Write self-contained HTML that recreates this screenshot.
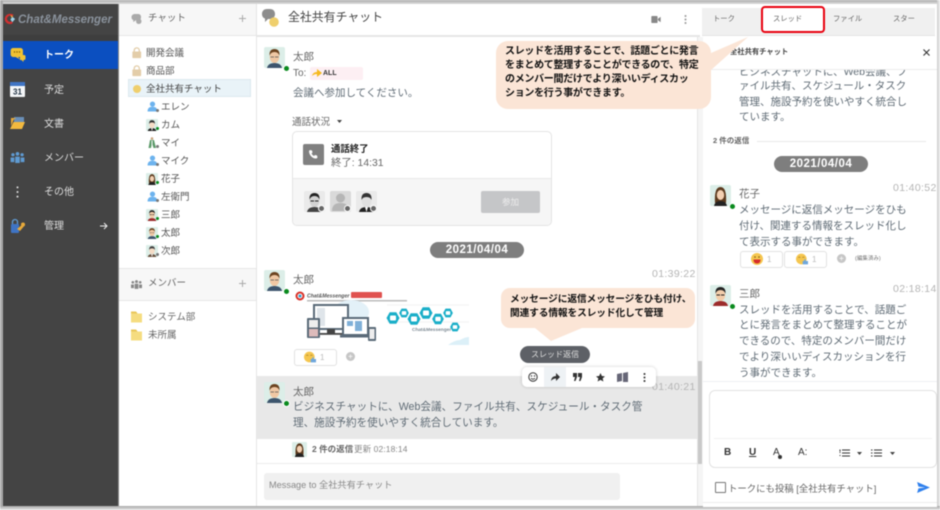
<!DOCTYPE html>
<html lang="ja">
<head>
<meta charset="utf-8">
<title>Chat&amp;Messenger</title>
<style>
html,body{margin:0;padding:0;background:#fff}
body{width:940px;height:510px;overflow:hidden;position:relative;font-family:"Liberation Sans","Noto Sans CJK JP",sans-serif;color:#555}
#w{position:absolute;left:0;top:0;width:940px;height:510px;overflow:hidden;filter:blur(.45px);background:#fff}
.a{position:absolute;white-space:nowrap;line-height:1.2;margin-top:2px}
.b{position:absolute}
svg{position:absolute;overflow:visible}
.nav{color:#ddd;font-size:10px;left:44px}
.ch{font-size:9.5px;color:#555}
.m{font-size:10.5px;color:#5f6b75}
.n{font-size:10.5px;color:#666}
.t{font-size:10.5px;color:#b5b5b5;letter-spacing:.35px}
.call{font-size:9.4px;font-weight:700;color:#222}
.co{font-size:10px;font-weight:700;color:#111;letter-spacing:-.3px}
.tab{font-size:7.3px;color:#666;letter-spacing:0}
.date{font-size:11.5px;font-weight:700;color:#fff;text-align:center;line-height:17px;letter-spacing:.5px;background:#7e7e7e;border-radius:8px;width:94px;height:16px}
</style>
</head>
<body>
<div id="w">
<svg width="0" height="0" style="position:absolute">
<defs>
<g id="taro"><rect width="21" height="21" rx="2" fill="#dceee8"/><path d="M3 21q1-5 7.500-5T18 21z" fill="#3d556d"/><ellipse cx="10.500" cy="10" rx="4.800" ry="6" fill="#f0c8a4"/><path d="M5.500 9q-.5-7 5-7t5 7q-1-4-5-4t-5 4z" fill="#6b4320"/><path d="M6.500 10h3.500M11 10h3.500" stroke="#555" stroke-width=".8"/></g>
<g id="hana"><rect width="21" height="21" rx="2" fill="#dceee8"/><path d="M5 18q-1-16 5.500-16T16 18z" fill="#5b3a1e"/><ellipse cx="10.500" cy="10" rx="3.700" ry="5" fill="#f3d0b2"/><path d="M4 21q1-5 6.500-5T17 21z" fill="#222"/></g>
<g id="sabu"><rect width="21" height="21" rx="2" fill="#dceee8"/><path d="M3 21q1-5 7.500-5T18 21z" fill="#9c2b2b"/><ellipse cx="10.500" cy="10" rx="4.800" ry="6" fill="#f2cdaa"/><path d="M5.500 9q-.5-7 5-7t5 7q-1-4-5-4t-5 4z" fill="#222"/><path d="M6.500 10h3.500M11 10h3.500" stroke="#222" stroke-width="1"/></g>
<g id="kam"><rect width="21" height="21" rx="2" fill="#dceee8"/><path d="M3 21q1-5 7.500-5T18 21z" fill="#222"/><path d="M9 16h3l-1.500 5z" fill="#fff"/><ellipse cx="10.500" cy="10" rx="4.800" ry="6" fill="#f5dcc6"/><path d="M5.500 9q-.5-7 5-7t5 7q-1-3-5-3t-5 3z" fill="#333"/></g>
<g id="jiro"><rect width="21" height="21" rx="2" fill="#dceee8"/><path d="M3 21q1-5 7.500-5T18 21z" fill="#6b5340"/><path d="M9 16h3l-1.500 5z" fill="#fff"/><ellipse cx="10.500" cy="10" rx="4.800" ry="6" fill="#f5dcc6"/><path d="M5.500 9q-.5-7 5-7t5 7q-1-3-5-3t-5 3z" fill="#444"/></g>
<g id="blue"><circle cx="10.500" cy="6" r="5" fill="#6db3ee"/><path d="M1 20q0-9 9.500-9T20 20z" fill="#6db3ee"/></g>
<g id="like"><circle cx="8" cy="8" r="8" fill="#f5c64f"/><path d="M3.500 6q1.500-2 3 0M9.500 6q1.500-2 3 0" stroke="#8a6a20" fill="none" stroke-width=".9"/><path d="M10 16v-5h2l1-3 1.500 .5V11H18v5z" fill="#6ea6dc"/></g>
<path id="plus" d="M1 4.500h7M4.500 1v7" stroke="#aaa" stroke-width="1"/>
<g id="lock"><path d="M3 6V4a3.500 3.500 0 0 1 7 0v2" stroke="#e3cda9" stroke-width="1.800" fill="none"/><rect x="0.500" y="5.500" width="12" height="9" rx="1" fill="#e3cda9"/></g>
<g id="fold"><path d="M0 1.500h5l1.500 2H11v9H0z" fill="#f5dc80"/><path d="M0 1.500h5l1.500 2H0z" fill="#e9c65a"/></g>
<g id="bub"><path d="M5 0h9a3 3 0 0 1 3 3v5a3 3 0 0 1-3 3h-3l3 3-6-3H5a3 3 0 0 1-3-3V3a3 3 0 0 1 3-3z" fill="#f1c232"/></g>
<g id="smile"><circle cx="5" cy="5" r="4.200" fill="none" stroke="#333" stroke-width="1"/><circle cx="3.500" cy="4" r=".7" fill="#333"/><circle cx="6.500" cy="4" r=".7" fill="#333"/><path d="M3 6.200q2 2 4 0" stroke="#333" fill="none" stroke-width=".9"/></g>
<g id="hex"><polygon points="-6.500,0 -3.300,-5.800 3.300,-5.800 6.500,0 3.300,5.800 -3.300,5.800" fill="#19aec8"/><rect x="-3" y="-2.500" width="6" height="5" rx="1" fill="#fff"/></g>
</defs>
</svg>

<!-- outer frame shadow -->
<div class="b" style="left:0;top:0;width:940px;height:4px;background:linear-gradient(#aaa,#ddd)"></div>
<div class="b" style="left:0;top:0;width:3px;height:510px;background:#aaa"></div>
<div class="b" style="left:937px;top:0;width:3px;height:510px;background:linear-gradient(90deg,#ccc,#eee)"></div>
<div class="b" style="left:0;top:506px;width:940px;height:4px;background:linear-gradient(#a8a8a8,#e5e5e5)"></div>

<!-- sidebar -->
<div class="b" style="left:3px;top:4px;width:115px;height:502px;background:#444"></div>
<div class="b" style="left:3px;top:35px;width:115px;height:6px;background:#3e3e3e"></div>
<div class="b" style="left:118px;top:4px;width:1px;height:502px;background:#888"></div>
<svg style="left:4px;top:13px" width="12" height="12" viewBox="0 0 13 13"><path d="M6.500 1a5.500 5.500 0 1 0 3 10l-1-2a3.300 3.300 0 1 1 0-5.500l2-1.500A5.500 5.500 0 0 0 6.500 1z" fill="#d32f2f"/><path d="M9 4l3 2.500L9 10 7 7z" fill="#9fd4e8"/><path d="M7 2l3 1.500L8 5z" fill="#f3a23a"/></svg>
<div class="a" style="left:18px;top:12px;font-size:11.5px;font-weight:700;font-style:italic;color:#8a929c">Chat&amp;Messenger</div>
<div class="b" style="left:3px;top:41px;width:115px;height:28px;background:#0b4fc0"></div>
<svg style="left:10px;top:48px" width="16" height="14" viewBox="0 0 16 14"><use href="#bub" transform="translate(-1 0) scale(.82)"/><path d="M10 7h4a1.500 1.500 0 0 1 1.500 1.500v2a1.500 1.500 0 0 1-1.500 1.500h-.5v2l-2-2H10z" fill="#f1c232"/><circle cx="4.500" cy="4" r=".7" fill="#7a5a00"/><circle cx="7" cy="4" r=".7" fill="#7a5a00"/><circle cx="9.500" cy="4" r=".7" fill="#7a5a00"/></svg>
<div class="a nav" style="top:48px;color:#fff;font-weight:700">トーク</div>
<svg style="left:10px;top:82px" width="15" height="15" viewBox="0 0 15 15"><rect width="15" height="15" rx="1" fill="#f4f6f8"/><rect width="15" height="4" fill="#3f74c4"/><text x="7.500" y="12.500" font-size="8" font-weight="700" text-anchor="middle" fill="#234" font-family="Liberation Sans">31</text></svg>
<div class="a nav" style="top:83px">予定</div>
<svg style="left:10px;top:116px" width="15" height="14" viewBox="0 0 15 14"><rect x="4" y="1" width="10" height="7" fill="#6a8fb8"/><path d="M1 2h4l1 1h-2L1 10z" fill="#e6a93b"/><path d="M3.500 6H15l-3 7H0z" fill="#f2b93f"/></svg>
<div class="a nav" style="top:117px">文書</div>
<svg style="left:10px;top:152px" width="15" height="11" viewBox="0 0 15 12" fill="#5f9bd3"><circle cx="2.500" cy="3" r="1.800"/><circle cx="7.500" cy="2" r="2"/><circle cx="12.500" cy="3" r="1.800"/><path d="M0 6h4v5H0zM5 5h5v7H5zM11 6h4v5h-4z"/></svg>
<div class="a nav" style="top:151px">メンバー</div>
<svg style="left:16px;top:186px" width="3" height="12" viewBox="0 0 3 13" fill="#ddd"><circle cx="1.500" cy="1.500" r="1.100"/><circle cx="1.500" cy="6.500" r="1.100"/><circle cx="1.500" cy="11.500" r="1.100"/></svg>
<div class="a nav" style="top:185px">その他</div>
<svg style="left:10px;top:219px" width="16" height="14" viewBox="0 0 16 14"><path d="M2.500 5V3a2.500 2.500 0 0 1 5 0v2" stroke="#5f9bd3" stroke-width="1.300" fill="none"/><rect x="1" y="5" width="8" height="9" rx="1" fill="#3f74c4"/><path d="M7 10l6-5 2 1-5 6z" fill="#e6a93b"/><circle cx="13" cy="5.500" r="2" fill="#e6a93b"/></svg>
<div class="a nav" style="top:219px">管理</div>
<svg style="left:100px;top:222px" width="8" height="8" viewBox="0 0 8 8"><path d="M0 4h7M4 1l3 3-3 3" stroke="#eee" stroke-width="1" fill="none"/></svg>

<!-- channel column -->
<div class="b" style="left:119px;top:4px;width:137px;height:31px;background:#f7f7f7;border-bottom:1px solid #e6e6e6"></div>
<svg style="left:131px;top:14px" width="11" height="10" viewBox="0 0 12 11" fill="#aaa"><path d="M4.500 0h3C10 0 11 1.500 11 3.500S10 7 7.500 7H5L2.500 9V6.700C1 6.200 .5 5 .5 3.500.5 1.500 2 0 4.500 0z"/><circle cx="8.500" cy="8" r="3"/></svg>
<div class="a" style="left:148px;top:11px;font-size:9.500px;color:#666">チャット</div>
<svg style="left:238px;top:14px" width="9" height="9"><use href="#plus"/></svg>
<svg style="left:132px;top:47px" width="9.500" height="12" viewBox="0 0 13 15"><use href="#lock"/></svg>
<div class="a ch" style="left:146px;top:46px">開発会議</div>
<svg style="left:132px;top:65px" width="9.500" height="12" viewBox="0 0 13 15"><use href="#lock"/></svg>
<div class="a ch" style="left:146px;top:64px">商品部</div>
<div class="b" style="left:128px;top:79px;width:121px;height:16px;background:#e9f3f8;border:1px solid #dbe8ee"></div>
<div class="b" style="left:133px;top:85px;width:8px;height:8px;border-radius:50%;background:#efcf6d"></div>
<div class="a ch" style="left:146px;top:82px;color:#444">全社共有チャット</div>

<svg style="left:147px;top:101px" width="11" height="11" viewBox="0 0 21 21"><use href="#blue"/></svg><i class="b" style="left:156px;top:109px;width:3px;height:3px;border-radius:50%;background:#777"></i>
<div class="a ch" style="left:161px;top:100px">エレン</div>
<svg style="left:146px;top:119px" width="12" height="12" viewBox="0 0 21 21"><use href="#kam"/></svg><i class="b" style="left:156px;top:127px;width:3px;height:3px;border-radius:50%;background:#0a8a1e"></i>
<div class="a ch" style="left:161px;top:118px">カム</div>
<svg style="left:147px;top:137px" width="11" height="12" viewBox="0 0 11 12"><circle cx="5" cy="1.500" r="1.300" fill="#c9a27a"/><path d="M3 3h4l2 8H6.500L5 6l-1 5H1.500z" fill="#5c9a6a"/><path d="M4.500 3.500h1v7h-1z" fill="#fff"/></svg><i class="b" style="left:156px;top:145px;width:3px;height:3px;border-radius:50%;background:#777"></i>
<div class="a ch" style="left:161px;top:136px">マイ</div>
<svg style="left:147px;top:155px" width="11" height="11" viewBox="0 0 21 21"><use href="#blue"/></svg><i class="b" style="left:156px;top:163px;width:3px;height:3px;border-radius:50%;background:#777"></i>
<div class="a ch" style="left:161px;top:154px">マイク</div>
<svg style="left:146px;top:173px" width="12" height="12" viewBox="0 0 21 21"><use href="#hana"/></svg><i class="b" style="left:156px;top:181px;width:3px;height:3px;border-radius:50%;background:#0a8a1e"></i>
<div class="a ch" style="left:161px;top:172px">花子</div>
<svg style="left:147px;top:191px" width="11" height="11" viewBox="0 0 21 21"><use href="#blue"/></svg><i class="b" style="left:156px;top:199px;width:3px;height:3px;border-radius:50%;background:#777"></i>
<div class="a ch" style="left:161px;top:190px">左衛門</div>
<svg style="left:146px;top:209px" width="12" height="12" viewBox="0 0 21 21"><use href="#sabu"/></svg><i class="b" style="left:156px;top:217px;width:3px;height:3px;border-radius:50%;background:#0a8a1e"></i>
<div class="a ch" style="left:161px;top:208px">三郎</div>
<svg style="left:146px;top:227px" width="12" height="12" viewBox="0 0 21 21"><use href="#taro"/></svg><i class="b" style="left:156px;top:235px;width:3px;height:3px;border-radius:50%;background:#0a8a1e"></i>
<div class="a ch" style="left:161px;top:226px">太郎</div>
<svg style="left:146px;top:245px" width="12" height="12" viewBox="0 0 21 21"><use href="#jiro"/></svg><i class="b" style="left:156px;top:253px;width:3px;height:3px;border-radius:50%;background:#777"></i>
<div class="a ch" style="left:161px;top:244px">次郎</div>

<div class="b" style="left:119px;top:268px;width:137px;height:31px;background:#f7f7f7;border-top:1px solid #e6e6e6;border-bottom:1px solid #e6e6e6"></div>
<svg style="left:131px;top:280px" width="11" height="9" viewBox="0 0 15 12" fill="#888"><circle cx="2.500" cy="3" r="1.800"/><circle cx="7.500" cy="2" r="2"/><circle cx="12.500" cy="3" r="1.800"/><path d="M0 6h4v5H0zM5 5h5v7H5zM11 6h4v5h-4z"/></svg>
<div class="a" style="left:148px;top:276px;font-size:9.500px;color:#666">メンバー</div>
<svg style="left:238px;top:279px" width="9" height="9"><use href="#plus"/></svg>
<svg style="left:131px;top:310px" width="11" height="13"><use href="#fold"/></svg>
<div class="a" style="left:148px;top:310px;font-size:9.500px;color:#666">システム部</div>
<svg style="left:131px;top:328px" width="11" height="13"><use href="#fold"/></svg>
<div class="a" style="left:148px;top:328px;font-size:9.500px;color:#666">未所属</div>

<!-- chat column -->
<div class="b" style="left:256px;top:4px;width:1px;height:502px;background:#e5e5e5"></div>
<div class="b" style="left:257px;top:35px;width:443px;height:2px;background:#e6e6e6"></div>
<svg style="left:261px;top:9px" width="18" height="18" viewBox="0 0 18 18"><path d="M6 0h3c3 0 5 2 5 5s-2 5-5 5H7l-3 3v-3.500C2 9 1 7 1 5c0-3 2-5 5-5z" fill="#8d8d8d"/><circle cx="13" cy="13" r="4.800" fill="#efcf6d"/></svg>
<div class="a" style="left:288px;top:8px;font-size:11.900px;color:#444">全社共有チャット</div>
<svg style="left:651px;top:16px" width="10" height="7" viewBox="0 0 12 9" fill="#888"><rect width="8" height="9" rx="1"/><path d="M8.500 3.500L12 1v7L8.500 5.500z"/></svg>
<svg style="left:684px;top:15px" width="3" height="9" fill="#999"><circle cx="1.500" cy="1" r="1"/><circle cx="1.500" cy="4.500" r="1"/><circle cx="1.500" cy="8" r="1"/></svg>

<svg style="left:264px;top:47px" width="21" height="21"><use href="#taro"/></svg>
<i class="b" style="left:283px;top:65px;width:5px;height:5px;border-radius:50%;background:#0a8a1e;border:.5px solid #fff"></i>
<div class="a n" style="left:293px;top:49px">太郎</div>
<div class="a" style="left:293px;top:66px;font-size:10px;color:#666">To:</div>
<div class="b" style="left:310px;top:67px;width:53px;height:13px;background:#fdeff3;border-radius:2px"></div>
<svg style="left:312px;top:69px" width="10" height="8" viewBox="0 0 10 8"><path d="M0 7q1-4 5-4V0l5 4-5 4V5Q2 5 0 7z" fill="#f6b91e"/></svg>
<div class="a" style="left:323px;top:68px;font-size:7px;font-weight:700;color:#333">ALL</div>
<div class="a m" style="left:293px;top:85px">会議へ参加してください。</div>
<div class="a" style="left:292px;top:115px;font-size:9.500px;color:#666">通話状況</div>
<svg style="left:337px;top:120px" width="5" height="3"><path d="M0 0h5L2.500 3z" fill="#444"/></svg>

<div class="b" style="left:292px;top:131px;width:258px;height:93px;border:1px solid #e4e4e4;border-radius:5px;background:#fff;overflow:hidden"><div class="b" style="left:0;top:46px;width:258px;height:47px;background:#f6f6f6;border-top:1px solid #e8e8e8"></div></div>
<div class="b" style="left:303px;top:144px;width:21px;height:21px;background:#808080;border-radius:2px"></div>
<svg style="left:309px;top:150px" width="9" height="9" viewBox="0 0 9 9"><path d="M1 0l2 .5.5 2-1 1a5 5 0 0 0 2.500 2.500l1-1 2 .5.500 2-1 1C3.500 9 0 5 0 1z" fill="#fff"/></svg>
<div class="a call" style="left:331px;top:141px">通話終了</div>
<div class="a" style="left:331px;top:156px;font-size:10.400px;color:#666">終了: 14:31</div>

<svg style="left:304px;top:191px;filter:grayscale(1)" width="21" height="21"><use href="#sabu"/></svg><i class="b" style="left:318px;top:205px;width:5px;height:5px;border-radius:50%;background:#666;border:1px solid #fff"></i>
<svg style="left:330px;top:191px" width="21" height="21"><rect width="21" height="21" rx="2" fill="#d9d9d9"/><circle cx="10.500" cy="7" r="4.500" fill="#b5b5b5"/><path d="M2 20q0-8 8.500-8T19 20z" fill="#b5b5b5"/></svg><i class="b" style="left:344px;top:205px;width:5px;height:5px;border-radius:50%;background:#666;border:1px solid #fff"></i>
<svg style="left:356px;top:191px;filter:grayscale(1)" width="21" height="21"><use href="#kam"/></svg><i class="b" style="left:370px;top:205px;width:5px;height:5px;border-radius:50%;background:#666;border:1px solid #fff"></i>
<div class="b" style="left:481px;top:191px;width:59px;height:22px;background:#c5c6c8;border-radius:2px;color:#eee;font-size:8.500px;text-align:center;line-height:22px">参加</div>

<div class="b date" style="left:430px;top:242px">2021/04/04</div>

<svg style="left:264px;top:270px" width="21" height="21"><use href="#taro"/></svg>
<i class="b" style="left:283px;top:288px;width:5px;height:5px;border-radius:50%;background:#0a8a1e;border:.5px solid #fff"></i>
<div class="a n" style="left:293px;top:272px">太郎</div>
<div class="a t" style="left:652px;top:266px">01:39:22</div>

<!-- banner -->
<svg style="left:295px;top:290px" width="176" height="56" viewBox="0 0 176 56">
<circle cx="5" cy="6" r="3.500" fill="none" stroke="#d8322a" stroke-width="2"/><circle cx="5" cy="6" r="1.500" fill="#2a9fd0"/>
<text x="12" y="7.500" font-size="5.200" font-style="italic" font-weight="700" fill="#555" font-family="Liberation Sans">Chat&amp;Messenger</text>
<rect x="56" y="2" width="31" height="6" rx="1" fill="#e0524f"/>
<rect x="12" y="10" width="100" height="1.500" fill="#bbb"/>
<ellipse cx="56" cy="22" rx="18" ry="12" fill="#e3f1f8"/>
<rect x="19" y="15" width="34" height="24" fill="#fff" stroke="#5a6a78" stroke-width="2"/><rect x="22" y="18" width="8" height="18" fill="#dfe5ea"/><rect x="32" y="39" width="8" height="5" fill="#444"/><rect x="25" y="43" width="22" height="1.800" fill="#444"/>
<rect x="12" y="28" width="13" height="20" rx="1" fill="#5a6a78"/><rect x="14" y="30" width="9" height="7.500" fill="#eee"/><rect x="14" y="39" width="9" height="7.500" fill="#dbb"/>
<rect x="48" y="28" width="25" height="17" fill="#fff" stroke="#5a6a78" stroke-width="2"/><rect x="52" y="31" width="6" height="5" fill="#7fb0d8"/><rect x="60" y="31" width="7" height="10" fill="#7fb0d8"/><rect x="45" y="45" width="31" height="2.500" fill="#5a6a78"/>
<rect x="73" y="37" width="8" height="14" rx="1" fill="#5a6a78"/><rect x="74.500" y="39" width="5" height="10" fill="#eee"/>
<path d="M153 55Q160 50 165 50 170 47 174 47V55z" fill="#dcf0f8"/>
<path d="M92 15h82M92 32h82" stroke="#f2f2f2"/>
<use href="#hex" transform="translate(98 28)"/><use href="#hex" transform="translate(109 23) scale(.75)"/><use href="#hex" transform="translate(119 29)"/><use href="#hex" transform="translate(131 23)"/><use href="#hex" transform="translate(143 29) scale(.9)"/><use href="#hex" transform="translate(153 23) scale(.75)"/><use href="#hex" transform="translate(160 37) scale(.75)"/>
<text x="117" y="41" font-size="4.800" font-weight="700" fill="#7d8a94" font-family="Liberation Sans">Chat&amp;Messenger</text>
</svg>

<div class="b" style="left:294px;top:349px;width:41px;height:15px;border:1px solid #e2e2e2;border-radius:3px;background:#fff"></div>
<svg style="left:304px;top:351px" width="12" height="12" viewBox="0 0 18 16"><use href="#like"/></svg>
<div class="a" style="left:320px;top:351px;font-size:8px;color:#bbb">1</div>
<div class="b" style="left:346px;top:352px;width:9px;height:9px;border-radius:50%;background:#c6c6c6;color:#fff;font-size:8px;text-align:center;line-height:9px">+</div>

<!-- highlighted row -->
<div class="b" style="left:257px;top:376px;width:443px;height:63px;background:#e8e8e8"></div>
<svg style="left:264px;top:382px" width="21" height="21"><use href="#taro"/></svg>
<i class="b" style="left:283px;top:400px;width:5px;height:5px;border-radius:50%;background:#0a8a1e;border:.5px solid #fff"></i>
<div class="a n" style="left:293px;top:384px">太郎</div>
<div class="a t" style="left:652px;top:379px">01:40:21</div>
<div class="a m" style="left:293px;top:399px;font-size:10.600px;letter-spacing:.02px">ビジネスチャットに、Web会議、ファイル共有、スケジュール・タスク管</div>
<div class="a m" style="left:293px;top:415px;font-size:10.600px">理、施設予約を使いやすく統合しています。</div>

<svg style="left:292px;top:442px" width="15" height="15" viewBox="0 0 21 21"><use href="#hana"/></svg>
<div class="a" style="left:312px;top:442px;font-size:8.500px;font-weight:700;color:#666">2 件の返信</div>
<div class="a" style="left:354px;top:442px;font-size:8.500px;color:#888;letter-spacing:.1px">更新 02:18:14</div>
<div class="b" style="left:257px;top:463px;width:443px;height:1px;background:#ececec"></div>
<div class="b" style="left:264px;top:473px;width:356px;height:27px;background:#f0f0f0;border-radius:3px"></div>
<div class="a" style="left:269px;top:478px;font-size:9.200px;color:#888">Message to 全社共有チャット</div>

<!-- scrollbar -->
<div class="b" style="left:697px;top:37px;width:5px;height:469px;background:#f5f5f5;border-left:1px solid #e5e5e5"></div>
<div class="b" style="left:698px;top:361px;width:4px;height:103px;background:#c9c9c9"></div>

<!-- right column -->
<div class="b" style="left:702px;top:8px;width:233px;height:27px;background:#f0f0f0;border-bottom:1px solid #e4e4e4"></div>
<div class="a tab" style="left:713px;top:13px">トーク</div>
<div class="b" style="left:761px;top:6px;width:60px;height:23px;background:#fff;border:2px solid #e8000e;border-radius:4px"></div>
<div class="a tab" style="left:773px;top:13px">スレッド</div>
<div class="a tab" style="left:833px;top:13px">ファイル</div>
<div class="a tab" style="left:893px;top:13px">スター</div>

<div class="a" style="left:730px;top:46px;font-size:7.300px;font-weight:700;color:#444">全社共有チャット</div>
<svg style="left:923px;top:49px" width="7" height="7"><path d="M.5 .5l6 6M6.500 .5l-6 6" stroke="#333" stroke-width="1.100"/></svg>
<div class="b" style="left:702px;top:69px;width:235px;height:1px;background:#ececec"></div>
<div class="a m" style="left:739px;top:68px;height:7px;overflow:hidden"><span style="position:relative;top:-4px">ビジネスチャットに、Web会議、フ</span></div>
<div class="a m" style="left:739px;top:78px">ァイル共有、スケジュール・タスク</div>
<div class="a m" style="left:739px;top:94px">管理、施設予約を使いやすく統合し</div>
<div class="a m" style="left:739px;top:109px">ています。</div>

<div class="a" style="left:713px;top:134px;font-size:7.500px;font-weight:700;color:#666">2 件の返信</div>
<div class="b" style="left:757px;top:141px;width:169px;height:1px;background:#e9e9e9"></div>
<div class="b date" style="left:774px;top:156px">2021/04/04</div>

<svg style="left:710px;top:185px" width="21" height="21"><use href="#hana"/></svg>
<i class="b" style="left:729px;top:203px;width:5px;height:5px;border-radius:50%;background:#0a8a1e;border:.5px solid #fff"></i>
<div class="a n" style="left:739px;top:186px">花子</div>
<div class="a t" style="left:893px;top:180px">01:40:52</div>
<div class="a m" style="left:739px;top:202px">メッセージに返信メッセージをひも</div>
<div class="a m" style="left:739px;top:218px">付け、関連する情報をスレッド化し</div>
<div class="a m" style="left:739px;top:234px">て表示する事ができます。</div>
<div class="b" style="left:740px;top:251px;width:41px;height:15px;border:1px solid #e2e2e2;border-radius:3px"></div>
<div class="b" style="left:784px;top:251px;width:41px;height:15px;border:1px solid #e2e2e2;border-radius:3px"></div>
<svg style="left:751px;top:253px" width="12" height="12" viewBox="0 0 12 12"><circle cx="6" cy="6" r="6" fill="#f5c64f"/><path d="M2.500 6.500h7q0 4-3.500 4t-3.500-4z" fill="#d52b2b"/><circle cx="4" cy="4" r=".8" fill="#7a5a10"/><circle cx="8" cy="4" r=".8" fill="#7a5a10"/></svg>
<div class="a" style="left:767px;top:253px;font-size:8px;color:#bbb">1</div>
<svg style="left:796px;top:253px" width="12" height="12" viewBox="0 0 18 16"><use href="#like"/></svg>
<div class="a" style="left:812px;top:253px;font-size:8px;color:#bbb">1</div>
<div class="b" style="left:837px;top:254px;width:9px;height:9px;border-radius:50%;background:#c6c6c6;color:#fff;font-size:8px;text-align:center;line-height:9px">+</div>
<div class="a" style="left:855px;top:254px;font-size:5.500px;color:#777">(編集済み)</div>

<svg style="left:710px;top:285px" width="21" height="21"><use href="#sabu"/></svg>
<i class="b" style="left:729px;top:303px;width:5px;height:5px;border-radius:50%;background:#0a8a1e;border:.5px solid #fff"></i>
<div class="a n" style="left:739px;top:286px">三郎</div>
<div class="a t" style="left:893px;top:281px">02:18:14</div>
<div class="a m" style="left:739px;top:302px">スレッドを活用することで、話題ご</div>
<div class="a m" style="left:739px;top:317px">とに発言をまとめて整理することが</div>
<div class="a m" style="left:739px;top:333px">できるので、特定のメンバー間だけ</div>
<div class="a m" style="left:739px;top:349px">でより深いいディスカッションを行</div>
<div class="a m" style="left:739px;top:365px">う事ができます。</div>

<div class="b" style="left:703px;top:381px;width:234px;height:125px;background:#fff;border-top:1px solid #eef0f3"></div>
<div class="b" style="left:709px;top:390px;width:226px;height:76px;border:1px solid #e2e2e2;border-radius:6px;background:#fff"></div>
<div class="b" style="left:714px;top:438px;width:218px;height:1px;background:#f1f1f1"></div>
<div class="a" style="left:724px;top:445px;font-size:10px;font-weight:700;color:#333">B</div>
<div class="a" style="left:749px;top:445px;font-size:10px;color:#333;text-decoration:underline;font-weight:700">U</div>
<div class="a" style="left:773px;top:445px;font-size:10px;color:#333">A</div>
<div class="b" style="left:778px;top:455px;width:4px;height:4px;border-radius:50%;background:#333"></div>
<div class="a" style="left:798px;top:445px;font-size:10px;color:#333">A:</div>
<svg style="left:839px;top:449px" width="11" height="8" viewBox="0 0 11 8" stroke="#333" stroke-width="1"><path d="M3 1h8M3 4h8M3 7h8M1 .5v2M.5 3.500h1M.5 6.500h1"/></svg>
<svg style="left:857px;top:452px" width="5" height="3"><path d="M0 0h5L2.500 3z" fill="#444"/></svg>
<svg style="left:871px;top:449px" width="11" height="8" viewBox="0 0 11 8" stroke="#333" stroke-width="1"><path d="M3 1h8M3 4h8M3 7h8M0 1h1.500M0 4h1.500M0 7h1.500"/></svg>
<svg style="left:890px;top:452px" width="5" height="3"><path d="M0 0h5L2.500 3z" fill="#444"/></svg>
<div class="b" style="left:715px;top:482px;width:9px;height:9px;border:1px solid #777;border-radius:1px"></div>
<div class="a" style="left:728px;top:481px;font-size:9.400px;color:#666">トークにも投稿 [全社共有チャット]</div>
<svg style="left:917px;top:482px" width="13" height="11" viewBox="0 0 14 12"><path d="M0 0l14 6-14 6 1.500-5L9 6 1.500 5z" fill="#2f80ed"/></svg>
<div class="b" style="left:703px;top:502px;width:234px;height:1px;background:#ececec"></div>

<!-- callouts -->
<svg style="left:0;top:0" width="940" height="510"><path d="M508 41H699a12 12 0 0 1 12 12L748 37 711 70V97a12 12 0 0 1-12 12H508a12 12 0 0 1-12-12V53a12 12 0 0 1 12-12z" fill="#fbe5d6"/><path d="M510 288H686a9 9 0 0 1 9 9V319a9 9 0 0 1-9 9H582L551 341 535 328H510a9 9 0 0 1-9-9V297a9 9 0 0 1 9-9z" fill="#fbe5d6"/></svg>
<div class="a co" style="left:505px;top:43px;line-height:14px">スレッドを活用することで、話題ごとに発言<br>をまとめて整理することができるので、特定<br>のメンバー間だけでより深いいディスカッ<br>ションを行う事ができます。</div>
<div class="a co" style="left:510px;top:291px;line-height:13.500px;font-size:9.700px;letter-spacing:-.1px">メッセージに返信メッセージをひも付け、<br>関連する情報をスレッド化して管理</div>

<div class="b" style="left:520px;top:346px;width:70px;height:17px;border-radius:9px;background:#5d6066;color:#ddd;font-size:8px;text-align:center;line-height:17px">スレッド返信</div>
<div class="b" style="left:522px;top:367px;width:134px;height:20px;background:#fff;border-radius:5px;box-shadow:0 0 3px rgba(0,0,0,.2)"></div>
<div class="b" style="left:544px;top:367px;width:22px;height:20px;background:#eef2f5"></div>
<svg style="left:528px;top:372px" width="10" height="10"><use href="#smile"/></svg>
<svg style="left:551px;top:373px" width="9" height="8" viewBox="0 0 9 8"><path d="M0 8q.5-5 5-5V0l4 4-4 4V5.500Q2 5.500 0 8z" fill="#333"/></svg>
<svg style="left:573px;top:373px" width="9" height="8" viewBox="0 0 9 8" fill="#333"><path d="M0 0h4v4L2.500 8H1l1-4H0zM5 0h4v4L7.500 8H6l1-4H5z"/></svg>
<svg style="left:596px;top:373px" width="9" height="9" viewBox="0 0 10 10"><path d="M5 0l1.500 3.300L10 3.700 7.400 6l.8 3.500L5 7.700 1.800 9.500 2.600 6 0 3.700l3.500-.4z" fill="#333"/></svg>
<svg style="left:617px;top:372px" width="11" height="10" viewBox="0 0 11 10"><path d="M0 2l5-1v8L0 10zM6 1l5-1v10H6z" fill="#667"/></svg>
<svg style="left:643px;top:373px" width="3" height="9" fill="#333"><circle cx="1.500" cy="1" r="1"/><circle cx="1.500" cy="4.500" r="1"/><circle cx="1.500" cy="8" r="1"/></svg>
</div>
</body>
</html>
